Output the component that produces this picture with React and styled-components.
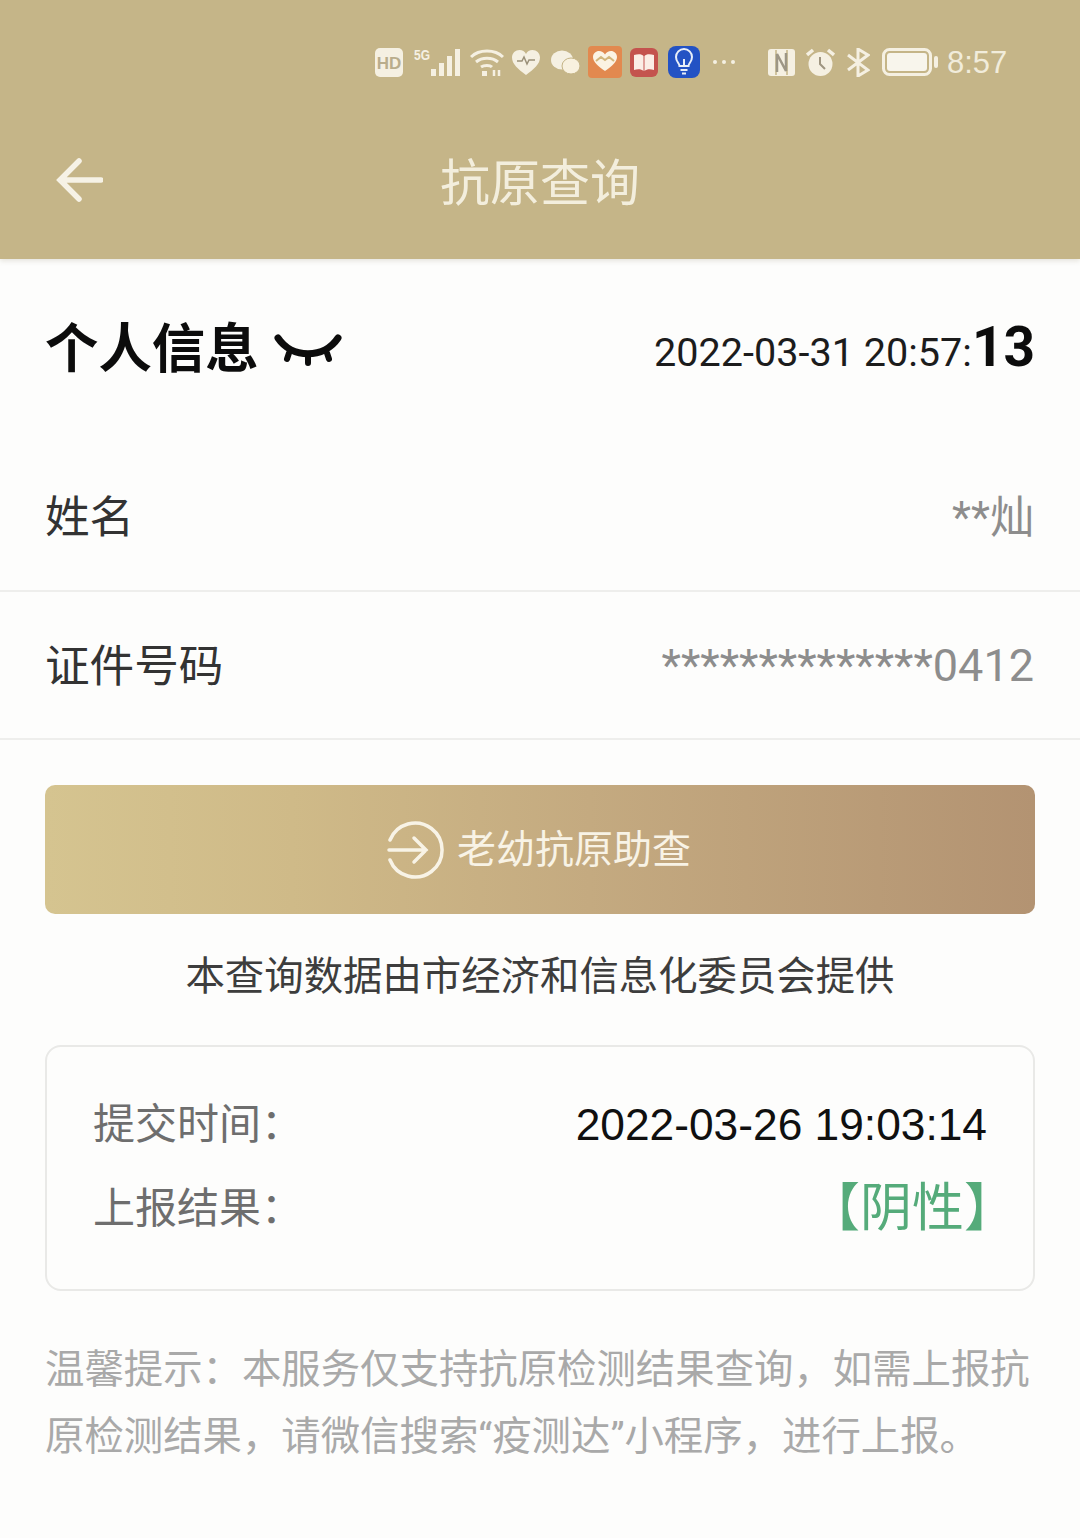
import styled, { createGlobalStyle } from "styled-components";

const GlobalStyle = createGlobalStyle`
  html, body {
    margin: 0;
    padding: 0;
    background: #fdfdfc;
  }
  * {
    box-sizing: border-box;
  }
`;

const Page = styled.div`
  width: 1080px;
  height: 1538px;
  overflow: hidden;
  font-family: "Roboto", "Noto Sans CJK SC", sans-serif;
  background: #fdfdfc;
`;

const Header = styled.header`
  height: 259px;
  background: #c5b588;
  box-shadow: 0 2px 5px rgba(120, 110, 80, 0.18);
`;

const StatusBar = styled.div`
  height: 124px;
  display: flex;
  align-items: center;
  padding-left: 375px;
`;

const TrayIcon = styled.svg`
  display: block;
  flex: none;
  margin-left: ${(props) => props.$gap || 0}px;
`;

const Clock = styled.span`
  margin-left: 9px;
  font-family: "Liberation Sans", sans-serif;
  font-size: 31px;
  line-height: 1;
  color: #f1ecdb;
`;

const NavBar = styled.div`
  height: 114px;
  display: flex;
  align-items: center;
  position: relative;
  justify-content: center;
`;

const BackButton = styled.svg`
  position: absolute;
  left: 55px;
  top: 33px;
`;

const NavTitle = styled.h1`
  margin: 6px 0 0;
  font-size: 50px;
  font-weight: 400;
  color: #f3eedd;
  line-height: 1;
`;

const InfoHead = styled.div`
  height: 176px;
  padding: 56px 45px 0 45px;
  display: flex;
  justify-content: space-between;
  align-items: flex-start;
`;

const InfoTitle = styled.div`
  display: flex;
  align-items: center;
  gap: 15px;
  margin-top: 3px;
  font-size: 53.4px;
  font-weight: 700;
  line-height: 64px;
  color: #0c0c0c;
`;

const Stamp = styled.div`
  display: flex;
  align-items: baseline;
  font-size: 39.6px;
  line-height: 64px;
  color: #1c1c1c;
`;

const StampSeconds = styled.strong`
  font-size: 55px;
  font-weight: 700;
  color: #0c0c0c;
`;

const Row = styled.div`
  height: ${(props) => props.$height}px;
  padding: ${(props) => props.$top}px 46px ${(props) => props.$bottom}px 45px;
  display: flex;
  justify-content: space-between;
  align-items: center;
  border-bottom: 2px solid #eeeeec;
`;

const RowLabel = styled.span`
  font-size: 44.6px;
  color: #333;
`;

const RowValue = styled.span`
  padding-top: ${(props) => props.$drop || 0}px;
  font-size: ${(props) => props.$size}px;
  color: #8d8d8d;
`;

const Content = styled.div`
  padding: 45px 45px 0;
`;

const AssistButton = styled.div`
  height: 129px;
  border-radius: 10px;
  display: flex;
  align-items: center;
  justify-content: center;
  gap: 12px;
  padding-right: 2px;
  background: linear-gradient(90deg, #d5c490 0%, #cfba88 25%, #c4aa80 55%, #b39372 100%);
  color: #f8f3e6;
  font-size: 39px;
`;

const AssistLabel = styled.span`
  padding-bottom: 8px;
`;

const SourceNote = styled.p`
  margin: 0;
  height: 131px;
  padding-top: 36px;
  text-align: center;
  font-size: 39.4px;
  line-height: 54px;
  white-space: nowrap;
  color: #3d3d3d;
`;

const ResultCard = styled.div`
  height: 246px;
  padding: 36px 46px 0;
  border: 2px solid #e9e9e7;
  border-radius: 16px;
  background: #fdfdfc;
`;

const ResultRow = styled.div`
  height: 84px;
  display: flex;
  justify-content: space-between;
  align-items: center;
  font-size: 44.3px;
`;

const ResultLabel = styled.span`
  padding-bottom: 9px;
  font-size: 42px;
  color: #6e6e6e;
`;

const ResultTime = styled.span`
  font-family: "Liberation Sans", sans-serif;
  color: #101010;
`;

const ResultStatus = styled.span`
  padding-bottom: 12px;
  font-size: 52px;
  margin-right: -29px;
  color: #55ab7a;
`;

const Notice = styled.div`
  margin-top: 45px;
  font-size: 39.4px;
  line-height: 67px;
  color: #a9a9a9;
`;

const NoticeLine = styled.div`
  white-space: nowrap;
`;

const ICON = "#f5f0e2";

const StatusIcons = () => (
  <>
    <TrayIcon width="28" height="29" viewBox="0 0 28 29">
      <rect width="28" height="29" rx="5" fill={ICON} />
      <text x="14" y="21" textAnchor="middle" fontFamily="Liberation Sans" fontWeight="700" fontSize="17" fill="#b9ad8c">HD</text>
    </TrayIcon>
    <TrayIcon $gap={11} width="46" height="29" viewBox="0 0 46 29">
      <text x="0" y="12" fontFamily="Liberation Sans" fontWeight="700" fontSize="14" textLength="16" lengthAdjust="spacingAndGlyphs" fill={ICON}>5G</text>
      <path d="M17 21h5v7h-5zM25 15h5v13h-5zM33 8h5v20h-5zM41 1h5v27h-5z" fill={ICON} />
    </TrayIcon>
    <TrayIcon $gap={10} width="34" height="29" viewBox="0 0 34 29" fill="none" stroke={ICON} strokeWidth="3">
      <path d="M1 9C9 1 25 1 33 9M6 14c6-5 16-5 22 0M11 19c3-2 9-2 11 0" />
      <rect x="12" y="23" width="5" height="5" fill={ICON} stroke="none" />
      <path d="M24 22v6M29 22v6" strokeWidth="2.5" />
    </TrayIcon>
    <TrayIcon $gap={8} width="28" height="25" viewBox="0 0 28 25">
      <path d="M14 25C6 19 0 14 0 7.500C0 3 3.500 0 7.500 0C10.500 0 12.800 1.500 14 4C15.200 1.500 17.500 0 20.500 0C24.500 0 28 3 28 7.500C28 14 22 19 14 25Z" fill={ICON} />
      <path d="M5 11h5l2-4 3 7 2-4h6" fill="none" stroke="#9a9078" strokeWidth="1.500" />
    </TrayIcon>
    <TrayIcon $gap={11} width="29" height="25" viewBox="0 0 29 25">
      <ellipse cx="11" cy="10" rx="11" ry="9.500" fill={ICON} />
      <ellipse cx="20" cy="16" rx="9" ry="8" fill="#f8f1df" stroke="#c4b385" strokeWidth="1" />
    </TrayIcon>
    <TrayIcon $gap={8} width="34" height="32" viewBox="0 0 34 32">
      <rect width="34" height="32" rx="4" fill="#e2894f" />
      <path d="M17 25C10 20 5 16 5 11C5 7.500 8 5 11 5C13.500 5 15.700 6.200 17 8.500C18.300 6.200 20.500 5 23 5C26 5 29 7.500 29 11C29 16 24 20 17 25Z" fill="#fbf3e3" />
      <path d="M8 15l5-4 4 3 4-3 5 4" fill="none" stroke="#d2b67c" strokeWidth="2" />
    </TrayIcon>
    <TrayIcon $gap={8} width="28" height="29" viewBox="0 0 28 29">
      <rect width="28" height="29" rx="6" fill="#c4534e" />
      <path d="M4 7c4-1 8-1 9.500 1v15c-2-2-6-2-9.500-1zM24 7c-4-1-8-1-9.500 1v15c2-2 6-2 9.500-1z" fill="#fbeee6" />
    </TrayIcon>
    <TrayIcon $gap={10} width="32" height="32" viewBox="0 0 32 32">
      <rect width="32" height="32" rx="8" fill="#2352c4" />
      <path d="M11.500 20c0-3-3.500-4-3.500-9a8 8 0 0 1 16 0c0 5-3.500 6-3.500 9z" fill="none" stroke="#e8eef8" strokeWidth="2" />
      <path d="M12.500 24h7M14 27.500h4M16 20v-7" fill="none" stroke="#e8eef8" strokeWidth="2" />
    </TrayIcon>
    <TrayIcon $gap={12} width="24" height="6" viewBox="0 0 24 6">
      <circle cx="3" cy="3" r="2" fill={ICON} />
      <circle cx="12" cy="3" r="2" fill={ICON} />
      <circle cx="21" cy="3" r="2" fill={ICON} />
    </TrayIcon>
    <TrayIcon $gap={32} width="27" height="27" viewBox="0 0 27 27">
      <rect width="27" height="27" rx="3" fill={ICON} />
      <path d="M8 1v25M19 1v25" stroke="#c5b588" strokeWidth="1.500" />
      <path d="M9 23V5l9 17V4" fill="none" stroke="#9d9685" strokeWidth="2.500" />
    </TrayIcon>
    <TrayIcon $gap={11} width="29" height="29" viewBox="0 0 29 29">
      <circle cx="14.500" cy="16" r="12" fill={ICON} />
      <path d="M1 7l6-5M28 7l-6-5" stroke={ICON} strokeWidth="3.500" />
      <path d="M14 9v7l5 5" fill="none" stroke="#9f9580" strokeWidth="2" />
    </TrayIcon>
    <TrayIcon $gap={11} width="24" height="29" viewBox="0 0 24 29" fill="none" stroke={ICON} strokeWidth="3">
      <path d="M2 7l20 15-10 6V1l10 6L2 22" />
    </TrayIcon>
    <TrayIcon $gap={12} width="56" height="28" viewBox="0 0 56 28">
      <rect x="1.500" y="1.500" width="47" height="25" rx="6" fill="none" stroke={ICON} strokeWidth="3" />
      <rect x="5" y="5" width="40" height="18" rx="3" fill="#f8f5ec" />
      <rect x="52" y="8" width="4" height="12" rx="2" fill={ICON} />
    </TrayIcon>
  </>
);

const App = () => {
  return (
    <Page>
      <GlobalStyle />
      <Header>
        <StatusBar>
          <StatusIcons />
          <Clock>8:57</Clock>
        </StatusBar>
        <NavBar>
          <BackButton width="48" height="46" viewBox="0 0 48 46" fill="none" stroke="#f6f2e6" strokeWidth="5.500" strokeLinecap="round">
            <path d="M24 4L5 23l19 19M5 23h41" />
          </BackButton>
          <NavTitle>抗原查询</NavTitle>
        </NavBar>
      </Header>

      <InfoHead>
        <InfoTitle>
          个人信息
          <svg width="68" height="34" viewBox="0 0 68 34" fill="none" stroke="#0c0c0c" strokeWidth="7" strokeLinecap="round">
            <path d="M4 5c14 21 46 21 60 0" />
            <path d="M15 20l-2 6M34 24v6M53 20l2 6" strokeWidth="6" />
          </svg>
        </InfoTitle>
        <Stamp>
          2022-03-31 20:57:
          <StampSeconds>13</StampSeconds>
        </Stamp>
      </InfoHead>

      <Row $height={157} $top={2} $bottom={0}>
        <RowLabel>姓名</RowLabel>
        <RowValue $size={44}>**灿</RowValue>
      </Row>
      <Row $height={148} $top={0} $bottom={6}>
        <RowLabel>证件号码</RowLabel>
        <RowValue $size={45} $drop={6}>**************0412</RowValue>
      </Row>

      <Content>
        <AssistButton>
          <svg width="58" height="58" viewBox="0 0 58 58" fill="none" stroke="#f8f3e6" strokeWidth="3.500" strokeLinecap="round">
            <path d="M3 19A27 27 0 1 1 3 39" />
            <path d="M2 29h37M27 17l12 12-12 12" />
          </svg>
          <AssistLabel>老幼抗原助查</AssistLabel>
        </AssistButton>
        <SourceNote>本查询数据由市经济和信息化委员会提供</SourceNote>
        <ResultCard>
          <ResultRow>
            <ResultLabel>{"提交时间\uFF1A"}</ResultLabel>
            <ResultTime>2022-03-26 19:03:14</ResultTime>
          </ResultRow>
          <ResultRow>
            <ResultLabel>{"上报结果\uFF1A"}</ResultLabel>
            <ResultStatus>【阴性】</ResultStatus>
          </ResultRow>
        </ResultCard>
        <Notice>
          <NoticeLine>{"温馨提示\uFF1A本服务仅支持抗原检测结果查询\uFF0C如需上报抗"}</NoticeLine>
          <NoticeLine>{"原检测结果\uFF0C请微信搜索\u201C疫测达\u201D小程序\uFF0C进行上报。"}</NoticeLine>
        </Notice>
      </Content>
    </Page>
  );
};

export default App;
